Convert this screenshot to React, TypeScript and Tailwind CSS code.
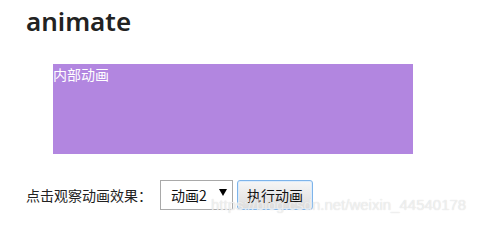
import React, { useState } from 'react';

const App = () => {
    const [effect, setEffect] = useState('2');

    return (
        <div className="relative w-[478px] h-[224px] overflow-hidden bg-white pl-[26px] pt-[5px] font-['Noto_Sans','Noto_Sans_CJK_SC',sans-serif] text-[#222]">
            <h1 className="text-[26px] leading-[32px] font-semibold text-[#222]">animate</h1>

            {/* animated box */}
            <div className="ml-[27px] mt-[27px] w-[360px] h-[90px] bg-[#b286e0] text-white text-[14px] leading-[20px] font-['Noto_Sans_CJK_SC',sans-serif]">
                内部动画
            </div>

            <div className="mt-[26px] flex items-center text-[14px] font-['Noto_Sans_CJK_SC',sans-serif]">
                <span className="w-[134px]">点击观察动画效果：</span>
                <div className="relative">
                    <select
                        value={effect}
                        onChange={(e) => setEffect(e.target.value)}
                        className="appearance-none w-[73px] h-[30px] border border-[#a9a9a9] bg-white pl-[10px] text-[14px] text-[#111] outline-none"
                    >
                        <option value="1">动画1</option>
                        <option value="2">动画2</option>
                        <option value="3">动画3</option>
                    </select>
                    <span className="pointer-events-none absolute right-[6px] top-[9px] w-0 h-0 border-l-[4px] border-r-[4px] border-t-[7px] border-l-transparent border-r-transparent border-t-black" />
                </div>
                <button className="ml-[4px] w-[76px] h-[30px] rounded-[3px] border border-[#7eb4ea] bg-gradient-to-b from-[#f6f6f6] to-[#dddddd] text-[14px] text-[#111] shadow-[inset_0_0_0_1px_#dcecfc]">
                    执行动画
                </button>
            </div>

            {/* watermark */}
            <span className="pointer-events-none absolute left-[211px] top-[195px] text-[15px] leading-[20px] text-white/60 font-['Liberation_Sans',sans-serif] [text-shadow:0_0_1px_#d0d0d0]">
                https://blog.csdn.net/weixin_44540178
            </span>
        </div>
    );
};

export default App;
